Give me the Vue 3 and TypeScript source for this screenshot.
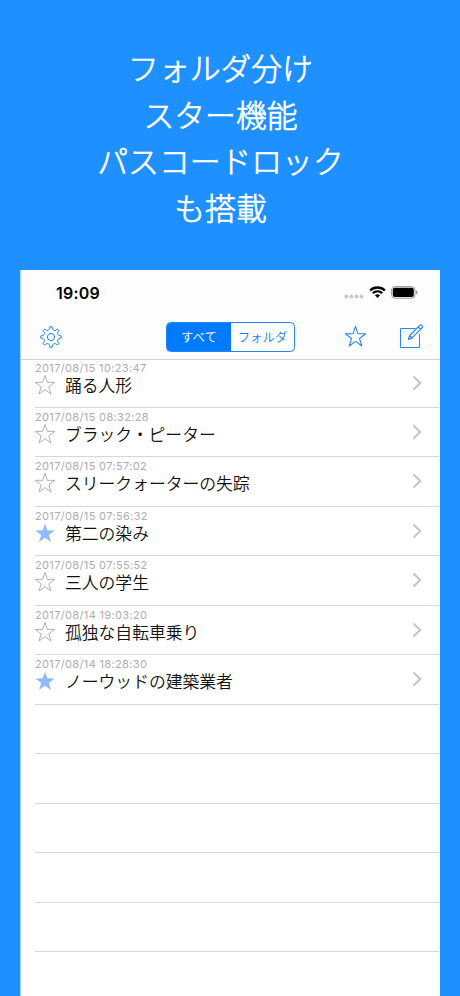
<script setup lang="ts">
interface Note {
  date: string
  title: string
  starred: boolean
}

const headline: string[] = ['フォルダ分け', 'スター機能', 'パスコードロック', 'も搭載']

const notes: Note[] = [
  { date: '2017/08/15 10:23:47', title: '踊る人形', starred: false },
  { date: '2017/08/15 08:32:28', title: 'ブラック・ピーター', starred: false },
  { date: '2017/08/15 07:57:02', title: 'スリークォーターの失踪', starred: false },
  { date: '2017/08/15 07:56:32', title: '第二の染み', starred: true },
  { date: '2017/08/15 07:55:52', title: '三人の学生', starred: false },
  { date: '2017/08/14 19:03:20', title: '孤独な自転車乗り', starred: false },
  { date: '2017/08/14 18:28:30', title: 'ノーウッドの建築業者', starred: true },
]

const emptyRows = 6

const starPoints = '10,0.4 12.3,7.3 19.7,7.4 13.8,11.9 16,19 10,14.7 4,19 6.2,11.9 0.3,7.4 7.7,7.3'

// Outline of an eight-toothed gear centred on (11, 11)
function gearPath(): string {
  const point = (degrees: number, radius: number): string => {
    const a = (degrees * Math.PI) / 180
    return `${(11 + radius * Math.sin(a)).toFixed(2)} ${(11 - radius * Math.cos(a)).toFixed(2)}`
  }
  let d = `M${point(-6, 10.3)}`
  for (let tooth = 0; tooth < 8; tooth++) {
    const t = tooth * 45
    d += `L${point(t + 6, 10.3)}L${point(t + 11, 8)}Q${point(t + 22.5, 6.9)} ${point(t + 34, 8)}L${point(t + 39, 10.3)}`
  }
  return `${d}Z`
}
const gear = gearPath()
</script>

<template>
  <main class="poster">
    <h1 class="headline">
      <span v-for="line in headline" :key="line">{{ line }}</span>
    </h1>
    <section class="screen">
      <div class="status">
        <span class="time">19:09</span>
        <div class="indicators">
          <svg class="dots" width="20" height="5" viewBox="0 0 20 5">
            <circle v-for="n in 4" :key="n" :cx="n * 5 - 2.6" cy="2.5" r="1.9" />
          </svg>
          <svg class="wifi" width="17" height="13" viewBox="0 0 17 13">
            <path d="M1.1 4.5C5.3.5 11.7.5 15.9 4.5M3.8 7.2C6.5 4.7 10.5 4.7 13.2 7.2" />
            <path class="solid" d="M5.9 9.3C7.4 7.9 9.6 7.9 11.1 9.3L8.5 12Z" />
          </svg>
          <svg class="battery" width="27" height="13" viewBox="0 0 27 13">
            <rect class="case" x=".6" y=".6" width="23.4" height="11.6" rx="3.4" />
            <rect x="1.8" y="1.8" width="21" height="9.2" rx="2" />
            <path class="tip" d="M25 4.3Q26.7 5 26.7 6.4T25 8.5Z" />
          </svg>
        </div>
      </div>
      <nav class="toolbar">
        <svg class="icon gear" width="22" height="22" viewBox="0 0 22 22">
          <path :d="gear" />
          <circle cx="11" cy="11" r="3.6" />
        </svg>
        <div class="segments">
          <span class="segment active">すべて</span>
          <span class="segment">フォルダ</span>
        </div>
        <div class="actions">
          <svg class="icon" width="21" height="21" viewBox="0 0 20 20">
            <polygon :points="starPoints" />
          </svg>
          <svg class="icon" width="25" height="26" viewBox="0 0 25 26">
            <path d="M16.5 4.5H1.5V23.5H20.5V10" />
            <path class="pencil" d="M9.3 15.4L10.7 11.5L20.7 1.4Q21.6.4 22.8 1.4T23.2 3.7L13.1 13.9Z M19.1 3L21.7 5.4M10.7 11.5L13.1 13.9" />
          </svg>
        </div>
      </nav>
      <ul class="list">
        <li v-for="note in notes" :key="note.date" class="row">
          <div class="body">
            <time class="date">{{ note.date }}</time>
            <div class="entry">
              <svg class="star" :class="{ on: note.starred }" width="20" height="20" viewBox="0 0 20 20">
                <polygon :points="starPoints" />
              </svg>
              <span class="title">{{ note.title }}</span>
            </div>
          </div>
          <svg class="chevron" width="10" height="16" viewBox="0 0 10 16">
            <path d="M1.5 1.5L8.2 8L1.5 14.5" />
          </svg>
        </li>
        <li v-for="n in emptyRows" :key="n" class="row"></li>
      </ul>
    </section>
  </main>
</template>

<style>
body {
  background: #1e90ff;
}
</style>

<style scoped>
.poster {
  box-sizing: border-box;
  display: flex;
  flex-direction: column;
  width: 460px;
  height: 996px;
  padding: 44px 20px 0;
  overflow: hidden;
  background: #1e90ff;
  font-family: Inter, "Noto Sans CJK JP", sans-serif;
}
.headline {
  display: flex;
  flex: none;
  flex-direction: column;
  align-items: center;
  height: 226px;
  margin: 0;
  padding-right: 19px;
  color: #fff;
  font: 300 30.8px/46.7px "Noto Sans CJK JP", sans-serif;
  -webkit-text-stroke: 0.7px #fff;
}
.screen {
  flex: 1;
  box-sizing: border-box;
  min-height: 0;
  overflow: hidden;
  border-left: 1px solid #a9d6ff;
  background: #fff;
}
.status {
  display: flex;
  justify-content: space-between;
  align-items: center;
  height: 46px;
  padding: 0 22px 0 35px;
  background: #fdfdfd;
}
.time {
  font-size: 16px;
  font-weight: 600;
  letter-spacing: 0.2px;
}
.indicators {
  display: flex;
  align-items: center;
  padding-bottom: 1px;
}
.dots {
  margin: 8px 5px 0 0;
  fill: #c8c8c8;
}
.wifi {
  margin-right: 5px;
  fill: none;
  stroke: #000;
  stroke-width: 2.3;
}
.wifi .solid {
  fill: #000;
  stroke: none;
}
.case {
  fill: none;
  stroke: #999;
}
.tip {
  fill: #999;
}
.toolbar {
  box-sizing: border-box;
  display: grid;
  grid-template-columns: 126px 129px 1fr;
  align-items: center;
  height: 44px;
  padding: 0 16px 2px 19px;
  border-bottom: 1px solid #d2d2d4;
  background: #fdfdfd;
}
.icon {
  fill: none;
  stroke: #2488ee;
  stroke-width: 1;
  stroke-linejoin: round;
}
.pencil {
  stroke-width: 1.2;
}
.segments {
  box-sizing: border-box;
  display: flex;
  height: 30px;
  overflow: hidden;
  border: 1px solid #2484ee;
  border-radius: 4.5px;
  background: #fff;
}
.segment {
  flex: 1;
  color: #1680f5;
  font: 350 12.4px/28px "Noto Sans CJK JP", sans-serif;
  text-align: center;
}
.segment.active {
  flex: 0 0 64px;
  background: #007aff;
  color: #fff;
}
.actions {
  display: flex;
  justify-content: flex-end;
  align-items: center;
  gap: 33px;
}
.list {
  margin: 0;
  padding: 0;
  list-style: none;
}
.row {
  box-sizing: border-box;
  display: flex;
  justify-content: space-between;
  height: 49.5px;
  margin: 0 1px 0 14px;
  border-bottom: 1px solid #d6d6d8;
}
.row:first-child {
  height: 47.7px;
}
.row:first-child .body,
.row:first-child .chevron {
  transform: translateY(-1px);
}
.body {
  display: flex;
  flex-direction: column;
  padding-top: 3px;
}
.date {
  height: 14px;
  color: #adadad;
  font-size: 11px;
  line-height: 13px;
  letter-spacing: 0.35px;
}
.entry {
  display: flex;
  align-items: center;
  gap: 10px;
  height: 19px;
}
.star {
  margin-bottom: 1px;
  fill: none;
  stroke: #b0b0b0;
  stroke-width: 1;
}
.star.on {
  fill: #93b9ff;
  stroke: none;
}
.title {
  color: #111;
  font: 350 16.8px/19px "Noto Sans CJK JP", sans-serif;
}
.chevron {
  margin: 16px 17px 0 0;
  fill: none;
  stroke: #c4c4c6;
  stroke-width: 2;
}
</style>
